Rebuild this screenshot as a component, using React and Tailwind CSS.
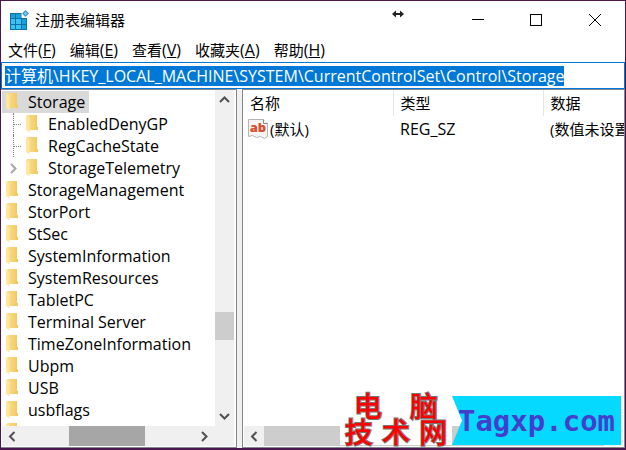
import clsx from "clsx";

const MENUS = [
  { label: "文件", hotkey: "F" },
  { label: "编辑", hotkey: "E" },
  { label: "查看", hotkey: "V" },
  { label: "收藏夹", hotkey: "A" },
  { label: "帮助", hotkey: "H" },
];

const KEYS = [
  { name: "Storage", selected: true },
  { name: "EnabledDenyGP", child: true },
  { name: "RegCacheState", child: true },
  { name: "StorageTelemetry", child: true, expandable: true },
  { name: "StorageManagement" },
  { name: "StorPort" },
  { name: "StSec" },
  { name: "SystemInformation" },
  { name: "SystemResources" },
  { name: "TabletPC" },
  { name: "Terminal Server" },
  { name: "TimeZoneInformation" },
  { name: "Ubpm" },
  { name: "USB" },
  { name: "usbflags" },
  { name: "" },
];

const VALUES = [{ name: "(默认)", type: "REG_SZ", data: "(数值未设置)" }];

const RegeditIcon = () => (
  <svg className="h-5 w-5 shrink-0" viewBox="0 0 20 20" aria-hidden="true">
    <rect x="1" y="3" width="17" height="17" fill="#0873ab" />
    <g fill="#1f9fd9">
      <rect x="2" y="4" width="4" height="4" />
      <rect x="7" y="4" width="5" height="4" />
      <rect x="13" y="9" width="4" height="5" />
      <rect x="13" y="15" width="4" height="4" />
    </g>
    <g fill="#3cc0f0">
      <rect x="2" y="9" width="4" height="5" />
      <rect x="7" y="9" width="5" height="5" />
      <rect x="2" y="15" width="4" height="4" />
      <rect x="7" y="15" width="5" height="4" />
    </g>
    <path d="M12.500 0H20v8h-7.500z" fill="#fff" />
    <path d="M16.500 0 20 3.500 16.500 7 13 3.500z" fill="#3c9cc6" />
    <path d="M16.500 2 18 3.500 16.500 5 15 3.500z" fill="#8fd8f2" />
  </svg>
);

const FolderIcon = () => (
  <svg className="h-5 w-4 shrink-0" viewBox="0 0 16 20" aria-hidden="true">
    <defs>
      <linearGradient id="folder" x1="0" x2="1">
        <stop offset="0" stopColor="#fbe08d" />
        <stop offset="1" stopColor="#f0c75e" />
      </linearGradient>
    </defs>
    <path d="M3 1h10v12h1v3H3z" fill="url(#folder)" />
    <path d="M2 1.500 5.500 4v14.500L2 16z" fill="#ffe7a0" />
  </svg>
);

const StringIcon = () => (
  <svg className="h-5 w-5 shrink-0" viewBox="0 0 20 20" aria-hidden="true">
    <path d="M.5.500h15l4 4v13l-3 2-4-2-4 1-4-2-4 1z" fill="#f4f4f4" stroke="#b5b5b5" />
    <path d="M15.500.500v4h4" fill="#fff" stroke="#8a8a8a" />
    <text
      x="10"
      y="13"
      textAnchor="middle"
      fill="#d9502f"
      className="font-['Open_Sans',sans-serif] text-[13px] font-extrabold"
    >
      ab
    </text>
  </svg>
);

const ARROWS = {
  up: "M1 7 5.500 2.500 10 7",
  down: "M1 3 5.500 7.500 10 3",
  left: "M7.500 1 3 5.500 7.500 10",
  right: "M3 1 7.500 5.500 3 10",
};

const Arrow = ({ dir, className }) => (
  <svg
    className={clsx("h-[11px] w-[11px] shrink-0", className)}
    viewBox="0 0 11 11"
    fill="none"
    stroke="currentColor"
    strokeWidth="2"
    aria-hidden="true"
  >
    <path d={ARROWS[dir]} />
  </svg>
);

const ScrollButton = ({ dir, label }) => (
  <button
    type="button"
    aria-label={label}
    className="flex h-5 min-w-[19px] shrink-0 items-center justify-center text-[#505050]"
  >
    <Arrow dir={dir} />
  </button>
);

const TitleBar = () => (
  <header className="flex h-[37px] shrink-0 items-center pl-2">
    <RegeditIcon />
    <h1 className="ml-[6px] flex-1">注册表编辑器</h1>
    <svg
      className="mr-[45px] mb-3 h-3 w-3"
      viewBox="0 0 12 12"
      fill="#222"
      aria-hidden="true"
    >
      <path d="M0 6 4 2.500V5h4V2.500L12 6 8 9.500V7H4v2.500z" />
    </svg>
    <div className="flex" role="group" aria-label="窗口">
      <button type="button" aria-label="最小化" className="flex h-8 w-[58px] items-center justify-center">
        <span className="h-px w-3 bg-black" />
      </button>
      <button type="button" aria-label="最大化" className="flex h-8 w-[58px] items-center justify-center">
        <span className="h-3 w-3 border border-black" />
      </button>
      <button type="button" aria-label="关闭" className="flex h-8 w-[60px] items-center justify-center">
        <svg className="h-3 w-3" viewBox="0 0 12 12" stroke="#000" aria-hidden="true">
          <path d="M0 0 12 12M12 0 0 12" />
        </svg>
      </button>
    </div>
  </header>
);

const TreeRow = ({ item }) => (
  <li
    role="treeitem"
    aria-selected={Boolean(item.selected)}
    className="flex h-[22px] shrink-0 items-center"
  >
    {item.child && (
      <span className="flex h-full w-5 shrink-0 items-center pl-[6px]">
        {item.expandable ? (
          <Arrow dir="right" className="text-[#a6a6a6]" />
        ) : (
          <span className="ml-[5px] flex h-full w-2 items-center border-l border-dotted border-[#808080]">
            <span className="w-full border-t border-dotted border-[#808080]" />
          </span>
        )}
      </span>
    )}
    <span
      className={clsx(
        "flex h-full items-center gap-2 pr-1 pl-[2px] whitespace-nowrap",
        item.selected && "bg-[#d9d9d9]",
      )}
    >
      <FolderIcon />
      {item.name}
    </span>
  </li>
);

const KeyTree = () => (
  <nav className="flex w-[236px] shrink-0 flex-col border-t border-r border-b border-[#828790] pr-[2px] pb-px pl-px">
    <div className="flex min-h-0 flex-1">
      <ul role="tree" className="flex min-w-0 flex-1 flex-col overflow-hidden pt-px text-base leading-5">
        {KEYS.map((item) => (
          <TreeRow key={item.name} item={item} />
        ))}
      </ul>
      <div className="flex w-[19px] flex-col bg-[#f0f0f0]">
        <ScrollButton dir="up" label="向上滚动" />
        <div className="flex-[201]" />
        <div className="h-7 bg-[#cdcdcd]" />
        <div className="flex-[66]" />
        <ScrollButton dir="down" label="向下滚动" />
      </div>
    </div>
    <div className="flex h-5 shrink-0 bg-[#f0f0f0] pl-px">
      <ScrollButton dir="left" label="向左滚动" />
      <div className="flex-[47]" />
      <div className="w-[76px] bg-[#a6a6a6]" />
      <div className="flex-[51]" />
      <ScrollButton dir="right" label="向右滚动" />
      <div className="w-5" />
    </div>
  </nav>
);

const ValueList = () => (
  <main className="flex min-w-0 flex-1 flex-col overflow-hidden border border-[#828790] bg-white">
    <div className="min-h-0 flex-1 overflow-hidden">
      <table className="w-[480px] table-fixed text-left">
        <thead>
          <tr className="h-[26px]">
            <th className="w-[150px] border-r border-[#e5e5e5] pl-[7px] font-normal">名称</th>
            <th className="w-[150px] border-r border-[#e5e5e5] pl-[7px] font-normal">类型</th>
            <th className="pl-[7px] font-normal">数据</th>
          </tr>
        </thead>
        <tbody>
          {VALUES.map((value) => (
            <tr key={value.name} className="h-[25px]">
              <td className="pl-[5px]">
                <span className="flex items-center gap-[2px]">
                  <StringIcon />
                  {value.name}
                </span>
              </td>
              <td className="pl-[7px] text-base leading-5">{value.type}</td>
              <td className="pl-[7px] whitespace-nowrap">{value.data}</td>
            </tr>
          ))}
        </tbody>
      </table>
    </div>
    <div className="mx-px mb-px flex h-5 shrink-0 bg-[#f0f0f0] pl-px">
      <ScrollButton dir="left" label="向左滚动" />
      <div className="flex-1 bg-[#cdcdcd]" />
      <ScrollButton dir="right" label="向右滚动" />
    </div>
  </main>
);

const Watermark = () => (
  <aside className="absolute right-1 bottom-[3px] flex items-end">
    <div className="w-[112px] text-[28px] leading-[26px] font-medium text-[#f00] [paint-order:stroke] [-webkit-text-stroke:2px_#777]">
      <p className="flex justify-around">
        <span>电</span>
        <span>脑</span>
      </p>
      <p className="flex justify-around bg-white">
        <span>技</span>
        <span>术</span>
        <span>网</span>
      </p>
    </div>
    <p className="flex h-[49px] w-[169px] items-center justify-center bg-[#06d9ff] font-['DejaVu_Sans_Mono',monospace] text-[29px] font-bold text-[#423fcf] [clip-path:polygon(0_0,100%_0,100%_100%,0_100%,10px_50%)]">
      Tagxp.com
    </p>
  </aside>
);

export default function App() {
  return (
    <div className="relative flex h-screen flex-col overflow-hidden border border-b-2 border-[#4b174f] bg-white font-['Open_Sans','Noto_Sans_CJK_SC',sans-serif] text-[15px] leading-5 text-black">
      <TitleBar />
      <nav className="flex h-6 shrink-0 items-center gap-[14px] pl-[7px]">
        {MENUS.map((menu) => (
          <button key={menu.hotkey} type="button" className="whitespace-nowrap">
            {menu.label}
            <span className="text-base leading-5">
              (<u>{menu.hotkey}</u>)
            </span>
          </button>
        ))}
      </nav>
      <div className="flex h-[27px] shrink-0 items-center border border-[#0078d7] pl-[3px]">
        <input
          aria-label="地址"
          readOnly
          defaultValue="计算机\HKEY_LOCAL_MACHINE\SYSTEM\CurrentControlSet\Control\Storage"
          className="field-sizing-content h-5 max-w-full bg-[#0078d7] text-base leading-5 text-white outline-none"
        />
      </div>
      <div className="flex min-h-0 flex-1 gap-[5px] bg-[#f0f0f0] *:bg-white">
        <KeyTree />
        <ValueList />
      </div>
      <Watermark />
    </div>
  );
}
